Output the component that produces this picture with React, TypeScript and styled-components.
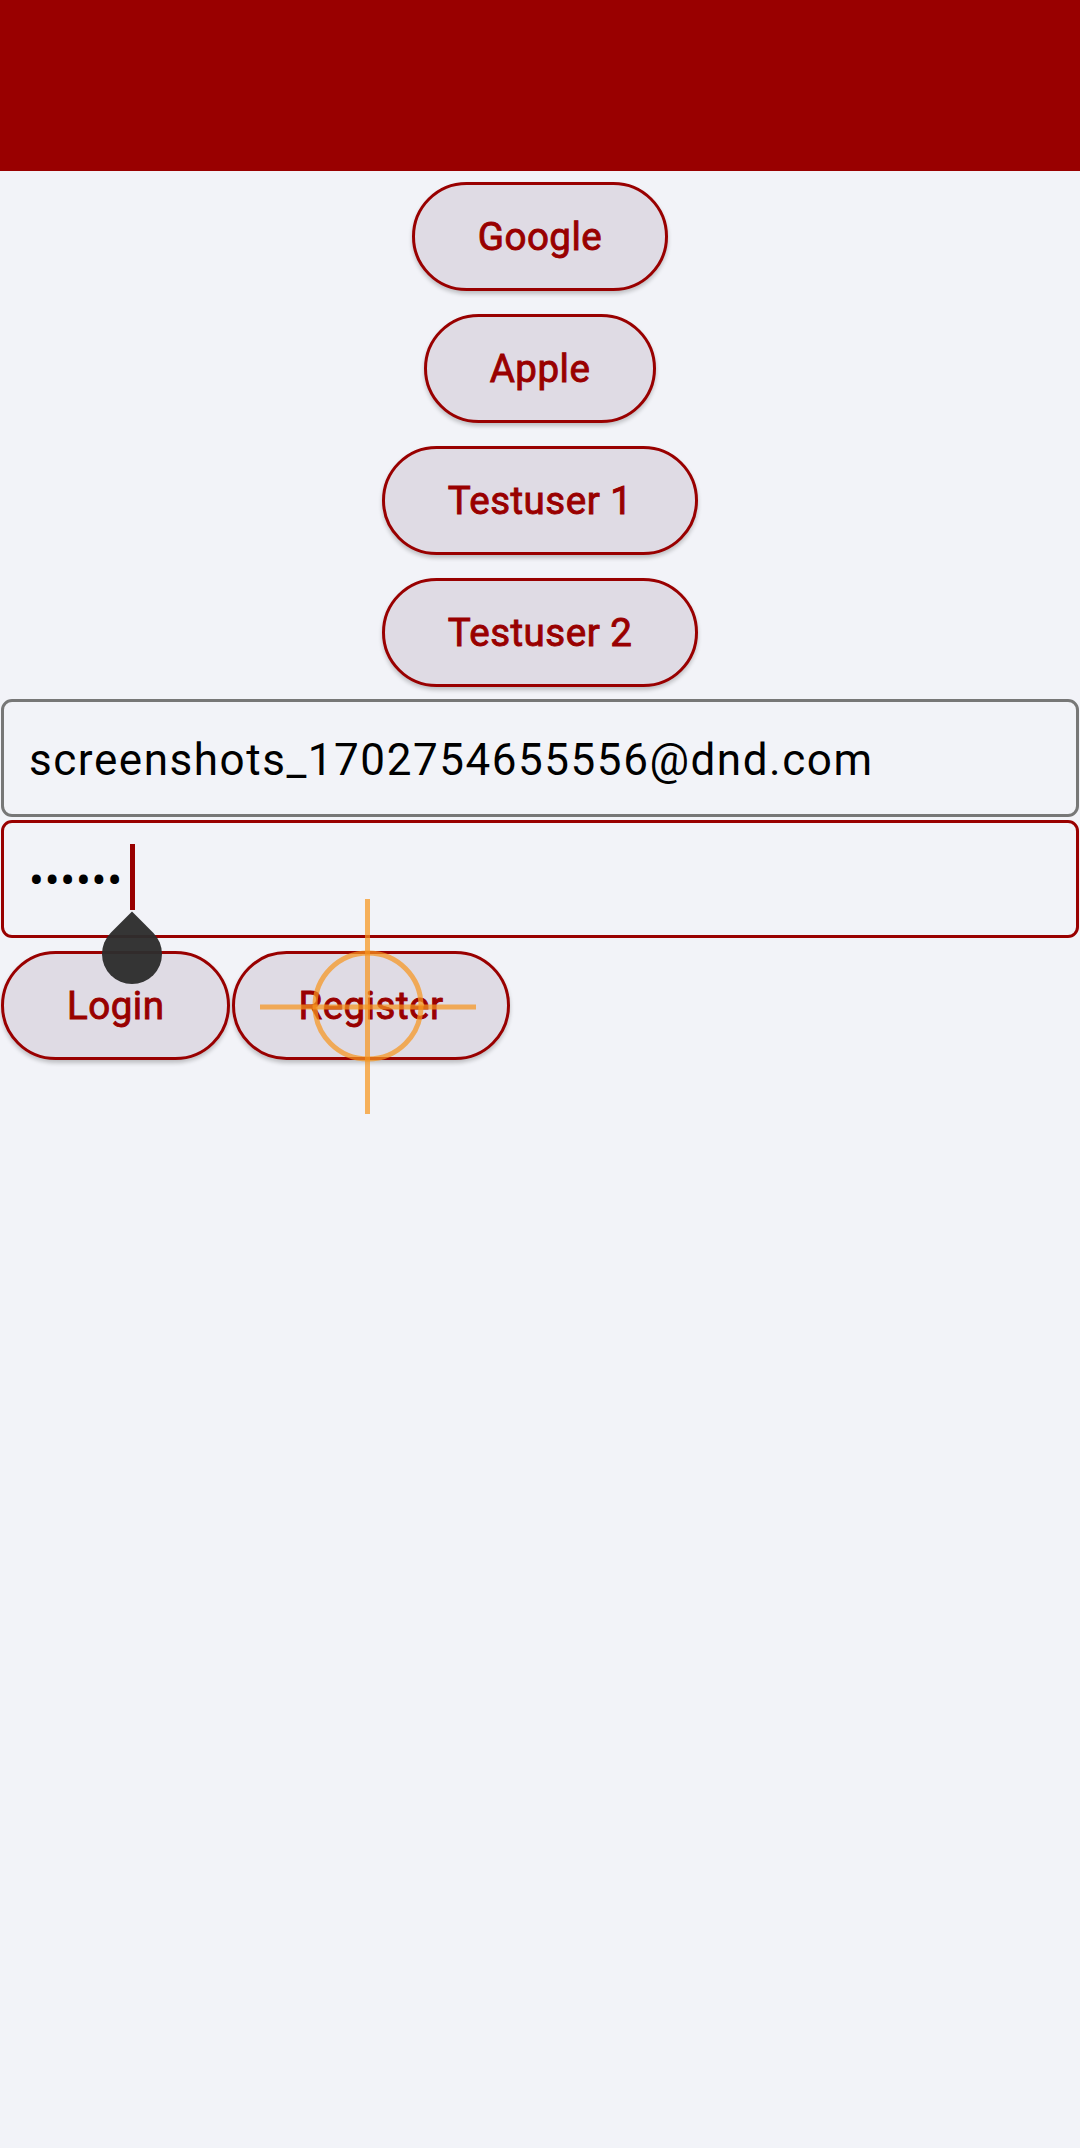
import React from "react";
import styled, { createGlobalStyle } from "styled-components";

const Global = createGlobalStyle`
  html, body { margin: 0; padding: 0; background: #f2f3f8; }
  body { font-family: Roboto, "Noto Sans", sans-serif; }
  * { box-sizing: border-box; }
`;

const Page = styled.div`
  position: relative;
  width: 1080px;
  min-height: 2148px;
  background: #f2f3f8;
`;

const Header = styled.header`
  height: 171px;
  background: #990000;
`;

const Providers = styled.div`
  display: flex;
  flex-direction: column;
  align-items: center;
  gap: 23px;
  padding-top: 11px;
`;

const PillButton = styled.button`
  height: 109px;
  padding: 0 63px;
  border: 3px solid #990000;
  border-radius: 55px;
  background: #dfdbe4;
  color: #990000;
  font-family: Roboto, sans-serif;
  font-weight: 400;
  -webkit-text-stroke: 0.9px #990000;
  font-size: 38.5px;
  letter-spacing: 0.5px;
  box-shadow: 0 3px 4px rgba(0, 0, 0, 0.22);
  white-space: nowrap;
  cursor: pointer;
`;

const Form = styled.div`
  display: flex;
  flex-direction: column;
  gap: 3px;
  margin-top: 12px;
  padding: 0 1px;
`;

const Field = styled.div<{ $focused?: boolean }>`
  position: relative;
  height: 118px;
  border: 3px solid ${(p) => (p.$focused ? "#990000" : "#777777")};
  border-radius: 11px;
  display: flex;
  align-items: center;
  padding: 4px 25px 0;
  font-family: Roboto, sans-serif;
  font-size: 44px;
  letter-spacing: 1.55px;
  color: #000;
`;

const Dots = styled.span`
  letter-spacing: 0.8px;
`;

const Actions = styled.div`
  display: flex;
  gap: 2px;
  margin-top: 13px;
  padding-left: 1px;
`;

const Caret = styled.div`
  position: absolute;
  left: 126px;
  top: 21px;
  width: 5px;
  height: 66px;
  background: #990000;
`;

const Handle = styled.div`
  position: absolute;
  left: 98px;
  top: 101px;
  width: 60px;
  height: 60px;
  background: rgba(45, 45, 45, 0.96);
  border-radius: 0 50% 50% 50%;
  transform: rotate(45deg);
  z-index: 5;
`;

const Touch = styled.svg`
  position: absolute;
  left: 258px;
  top: 897px;
  z-index: 6;
  pointer-events: none;
`;

export default function App() {
  return (
    <>
      <Global />
      <Page>
        <Header />
        <Providers>
          <PillButton>Google</PillButton>
          <PillButton>Apple</PillButton>
          <PillButton>Testuser 1</PillButton>
          <PillButton>Testuser 2</PillButton>
        </Providers>
        <Form>
          <Field>screenshots_1702754655556@dnd.com</Field>
          <Field $focused>
            <Dots>••••••</Dots>
            <Caret />
            <Handle />
          </Field>
        </Form>
        <Actions>
          <PillButton>Login</PillButton>
          <PillButton>Register</PillButton>
        </Actions>
        <Touch width="220" height="220" viewBox="0 0 220 220">
          <g stroke="rgba(247,150,30,0.72)" strokeWidth="5" fill="none">
            <circle cx="110" cy="109" r="53" />
            <line x1="109.5" y1="2" x2="109.5" y2="217" />
            <line x1="2" y1="110" x2="218" y2="110" />
          </g>
        </Touch>
      </Page>
    </>
  );
}
